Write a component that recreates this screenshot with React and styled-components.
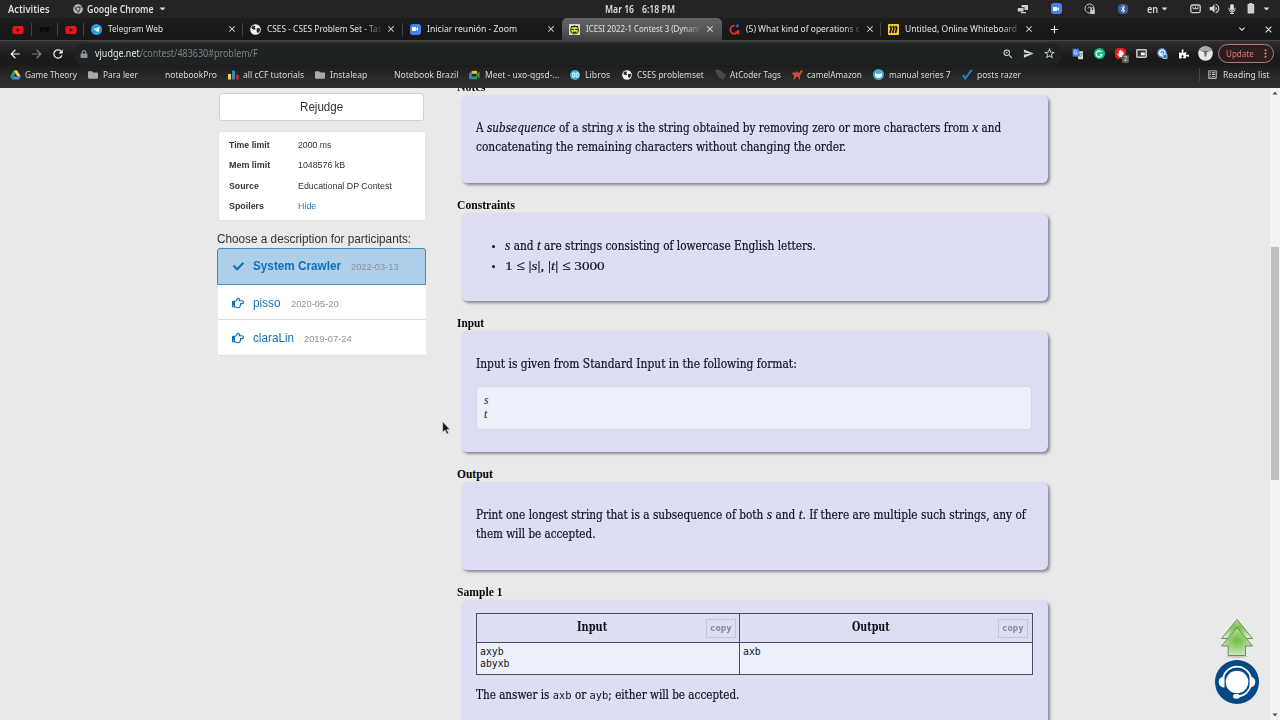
import React, { useLayoutEffect, useRef, useState } from "react";
import styled, { createGlobalStyle } from "styled-components";
import {
  FaBluetoothB,
  FaCaretDown,
  FaCheck,
  FaLock,
  FaMicrophone,
  FaPuzzlePiece,
  FaRegHandPointRight,
  FaFolder,
  FaVideo,
  FaYoutube,
  FaTelegramPlane,
  FaHandPaper,
  FaChrome,
} from "react-icons/fa";
import {
  MdArrowBack,
  MdArrowForward,
  MdRefresh,
  MdClose,
  MdAdd,
  MdExpandMore,
  MdMoreVert,
  MdSend,
  MdStarBorder,
  MdZoomIn,
  MdPublic,
  MdVolumeUp,
  MdOutlineListAlt,
} from "react-icons/md";
// ------------------------------------------------------------

const GlobalStyle = createGlobalStyle`
  * { box-sizing: border-box; }
  body { margin: 0; overflow: hidden; }
  svg { display: block; flex: none; }
`;

const UI_FONT = `"Noto Sans", "Open Sans", sans-serif`;
const BODY_FONT = `"DejaVu Serif Condensed", "DejaVu Serif", serif`;

const FitBox = styled.span`
  display: inline-block;
  width: ${(p) => p.$w}px;
  white-space: nowrap;
  text-align: left;
`;

const FitInner = styled.span`
  display: inline-block;
  transform-origin: 0 50%;
`;

// squeezes a run of text to the given width
function Fit({ w, children }) {
  const ref = useRef(null);
  const [scale, setScale] = useState(1);
  useLayoutEffect(() => {
    setScale(w / ref.current.offsetWidth);
  }, [w]);
  return (
    <FitBox $w={w}>
      <FitInner ref={ref} style={{ transform: `scaleX(${scale})` }}>
        {children}
      </FitInner>
    </FitBox>
  );
}

const Screen = styled.div`
  position: relative;
  width: 1280px;
  height: 720px;
  display: flex;
  flex-direction: column;
  overflow: hidden;
  background: #e9e9e9;
  font-family: ${UI_FONT};
`;

// ---------- desktop bar ----------

const DesktopBar = styled.div`
  display: grid;
  grid-template-columns: 605px 1fr auto;
  height: 18px;
  background: #262324;
  color: #dedede;
  font-size: 10px;
  font-weight: 600;
  line-height: 16px;
`;

const BarGroup = styled.div`
  display: flex;
  align-items: center;
  gap: ${(p) => p.$gap || 0}px;
  padding: 0 0 1px ${(p) => p.$left || 0}px;
`;

const AppMenu = styled.div`
  display: flex;
  align-items: center;
  gap: 4px;
  margin-left: 23px;
`;

const Slot = styled.div`
  display: flex;
  align-items: center;
  justify-content: center;
  width: ${(p) => p.$w}px;
  margin-left: ${(p) => p.$ml || 0}px;
  color: ${(p) => p.$color || "#d8d8d8"};
`;

const Tray = styled.div`
  display: flex;
  align-items: center;
  padding: 0 8px 1px 0;
`;

const Tile = styled.span`
  display: flex;
  flex: none;
  align-items: center;
  justify-content: center;
  width: ${(p) => p.$size || 11}px;
  height: ${(p) => p.$size || 11}px;
  border-radius: ${(p) => p.$r || "3px"};
  background: ${(p) => p.$bg};
  color: ${(p) => p.$color || "#fff"};
`;

// ---------- tabs ----------

const TabStrip = styled.div`
  display: flex;
  align-items: flex-start;
  height: 22px;
  padding-left: 4px;
  background: linear-gradient(#1e1c1c, #191818 60%, #171717);
`;

const Pinned = styled.div`
  display: flex;
  align-items: center;
  justify-content: center;
  width: ${(p) => p.$w}px;
  height: 13px;
  margin-top: 5px;
  border-right: 1px solid #454343;
`;

const TabBox = styled.div`
  display: flex;
  align-items: center;
  width: 159.4px;
  height: ${(p) => (p.$active ? "22px" : "13px")};
  margin-top: ${(p) => (p.$active ? 0 : "4.5px")};
  padding: 0 5px 0 7px;
  border-right: 1px solid ${(p) => (p.$line ? "#454343" : "transparent")};
  border-radius: ${(p) => (p.$active ? "5px 5px 0 0" : 0)};
  background: ${(p) =>
    p.$active ? "linear-gradient(#646464, #555 55%, #414141)" : "transparent"};
  color: #e4e4e4;
`;

const TabTitle = styled.div`
  width: 116px;
  margin: 0 3px 1px 6px;
  overflow: hidden;
  font-size: 9.8px;
  line-height: 14px;
  mask-image: ${(p) =>
    p.$fade ? "linear-gradient(90deg, #000 84%, transparent)" : "none"};
`;

const StripButton = styled.div`
  display: flex;
  align-items: center;
  justify-content: center;
  height: 22px;
  width: 16px;
  margin-left: ${(p) => p.$ml}px;
  color: #f0f0f0;
`;

// ---------- toolbar ----------

const Toolbar = styled.div`
  display: flex;
  align-items: center;
  height: 26px;
  border-top: 1px solid #454545;
  background: linear-gradient(#313131, #191919 60%, #1b1b1b);
`;

const NavButtons = styled.div`
  display: flex;
  gap: 7.5px;
  width: 74px;
  padding-left: 8px;
`;

const Address = styled.div`
  display: flex;
  align-items: center;
  width: 988px;
  height: 22px;
  padding: 0 2px 0 6px;
  border-radius: 11px;
  background: #1e2223;
  color: #7e8385;
  font-size: 10px;
`;

const Url = styled.div`
  flex: 1;
  margin: 0 0 2px 7px;
  line-height: 16px;
  strong {
    color: #e8e8e8;
    font-weight: 400;
  }
`;

const Extensions = styled.div`
  display: flex;
  align-items: center;
  width: 156px;
  padding-left: 5.5px;
`;

const Badge = styled.span`
  position: absolute;
  right: -3px;
  bottom: -4px;
  padding: 0 1.5px;
  border-radius: 1px;
  background: #5b5b5b;
  color: #eee;
  font-size: 6.5px;
  line-height: 8px;
`;

const Badged = styled.span`
  position: relative;
`;

const UpdateButton = styled.div`
  display: flex;
  align-items: center;
  justify-content: space-between;
  width: 56px;
  height: 19px;
  padding: 0 1px 1px 7px;
  border: 1px solid #b57c7c;
  border-radius: 10px;
  background: #2c1f1f;
  color: #e17a79;
  font-size: 9.5px;
`;

// ---------- bookmarks ----------

const Bookmarks = styled.div`
  display: flex;
  align-items: center;
  gap: 11.35px;
  height: 22px;
  padding: 0 10px 5px;
  background: linear-gradient(#1d1d1d, #2d2d2d 70%, #303030);
  color: #dadada;
  font-size: 9.8px;
  line-height: 14px;
`;

const Bookmark = styled.div`
  display: flex;
  align-items: center;
  gap: 5px;
`;

const BookmarkIcon = styled.div`
  display: flex;
  width: 10px;
  height: 11px;
  align-items: center;
  justify-content: center;
`;

const ReadingList = styled.div`
  display: flex;
  align-items: center;
  gap: 5px;
  margin-left: auto;
  padding-left: 7px;
  border-left: 1px solid #444;
`;

// ---------- page ----------

const Page = styled.div`
  display: flex;
  flex: 1;
  min-height: 0;
  padding-left: 217px;
  overflow: hidden;
`;

const Sidebar = styled.aside`
  width: 209px;
  color: #333;
  font-family: "Liberation Sans", Arial, sans-serif;
  font-size: 12px;
`;

const RejudgeButton = styled.div`
  height: 28px;
  margin: 5px 2px 0;
  border: 1px solid #d2d2d2;
  border-radius: 3px;
  background: #fff;
  line-height: 26px;
  text-align: center;
`;

const InfoCard = styled.dl`
  display: grid;
  grid-template-columns: 69px 1fr;
  grid-auto-rows: 20.4px;
  height: 90px;
  margin: 10px 0 0 1px;
  padding: 3px 9.5px;
  border: 1px solid #e2e2e2;
  border-radius: 3px;
  background: #fff;
  font-size: 9.4px;
  line-height: 20px;
  dt { font-weight: 700; }
  dd { margin: 0; }
`;

const Link = styled.span`
  color: #1a7cc0;
`;

const Prompt = styled.div`
  margin-top: 10px;
  height: 17px;
  line-height: 16px;
`;

const Author = styled.div`
  display: flex;
  align-items: center;
  height: ${(p) => (p.$active ? 37 : 35.3)}px;
  padding: 0 0 ${(p) => (p.$active ? 1 : 0)}px ${(p) => (p.$active ? 15 : 13)}px;
  margin-left: ${(p) => (p.$active ? 0 : 1)}px;
  border: 1px solid ${(p) => (p.$active ? "#3f8cc6" : "transparent")};
  border-bottom-color: ${(p) => (p.$active ? "#3f8cc6" : "#ddd")};
  border-radius: ${(p) => (p.$active ? "3px 3px 0 0" : 0)};
  background: ${(p) => (p.$active ? "#adcfea" : "#fff")};
  color: #0e72b8;
  font-weight: ${(p) => (p.$active ? 700 : 400)};
`;

const AuthorName = styled.span`
  margin: 0 10px 0 9px;
`;

const AuthorDate = styled.span`
  padding-top: 1px;
  color: #8b9399;
  font-size: 9.5px;
  font-weight: 400;
`;

const Statement = styled.main`
  width: 591px;
  margin: -8px 0 0 31px;
  color: #101225;
  font-family: ${BODY_FONT};
  font-size: 12px;
  line-height: 19px;
  -webkit-text-stroke: 0.2px currentColor;
`;

const Heading = styled.h4`
  height: 15px;
  margin: ${(p) => (p.$first ? 0 : "15px")} 0 0 0;
  color: #080808;
  font: bold 11.5px/14px "Liberation Serif", serif;
  -webkit-text-stroke: 0;
`;

const Card = styled.section`
  height: ${(p) => p.$h}px;
  margin-left: 4px;
  padding: ${(p) => p.$top || 24}px 16px 0 15px;
  border-radius: 6px;
  background: #dddef3;
  box-shadow: 2px 2px 3px #85879a;
`;

const Line = styled.div`
  height: 19px;
`;

const Bullets = styled.ul`
  margin: 0;
  padding-left: 29px;
  li { height: 19px; }
  li::marker { font-size: 10px; }
`;

const M = styled.i`
  font-family: "Liberation Serif", serif;
  font-size: ${(p) => p.$size || 14}px;
  line-height: 1;
`;

const MathText = styled.span`
  font-family: "Liberation Serif", serif;
  font-size: 13.5px;
`;

const Pre = styled.div`
  height: 44px;
  margin-top: 12px;
  padding: 7px 7px;
  border: 1px solid #d5d6e4;
  border-radius: 4px;
  background: #ecf0fa;
  line-height: 14px;
  -webkit-text-stroke: 0;
`;

const PreLine = styled.div`
  display: flex;
  align-items: center;
  height: 14px;
`;

const SampleTable = styled.div`
  display: grid;
  grid-template-columns: 263px 1fr;
  grid-template-rows: 28.5px 32px;
  width: 557px;
  border: 1px solid #484b5c;
  border-width: 1px 0 0 1px;
`;

const Th = styled.div`
  display: grid;
  grid-template-columns: 1fr auto;
  align-items: center;
  padding: 0 ${(p) => p.$right}px 0 ${(p) => p.$left}px;
  border: 1px solid #484b5c;
  border-width: 0 1px 1px 0;
  color: #0b0c18;
  font-weight: 700;
  text-align: center;
  -webkit-text-stroke: 0;
`;

const Td = styled.pre`
  margin: 0;
  padding: 3px 3px 0;
  border: 1px solid #484b5c;
  border-width: 0 1px 1px 0;
  background: #ecf0fa;
  font: 9.8px/12px "DejaVu Sans Mono", monospace;
  -webkit-text-stroke: 0;
`;

const CopyButton = styled.span`
  height: 19px;
  margin-top: 1px;
  padding: 0 3px;
  border: 1px solid #c4c6d6;
  color: #858797;
  font: bold 9.4px/16px "DejaVu Sans Mono", monospace;
`;

const Code = styled.code`
  font: 10.8px "DejaVu Sans Mono", monospace;
  -webkit-text-stroke: 0;
`;

const Answer = styled.div`
  margin-top: 11px;
`;

const Scrollbar = styled.div`
  display: flex;
  flex-direction: column;
  align-items: center;
  justify-content: space-between;
  width: 10px;
  margin-left: auto;
  padding: 3px 0;
  background: #f2f2f2;
`;

const Thumb = styled.div`
  width: 8px;
  height: 233px;
  margin-bottom: 81px;
  background: #bfbfc0;
`;

const Floating = styled.div`
  position: absolute;
  left: 1215px;
  top: 618px;
`;

const Pointer = styled.svg`
  position: absolute;
  left: 442px;
  top: 421px;
`;
// ------------------------------------------------------------

const Globe = ({ size = 12 }) => (
  <svg width={size - 1} height={size - 1} viewBox="0 0 11 11">
    <circle cx="5.5" cy="5.5" r="5.3" fill="#f4f4f4" />
    <path d="M1.3 3.2L3.6 1.4l1.8.8-.8 1.6 1.2 1.4-2 .6L2.4 5zM6.6 4.6l2.8-.8.6 2.6-2 2.8-1.4-2z" fill="#222" />
  </svg>
);

const Zoom = () => (
  <Tile $bg="#4584ec">
    <FaVideo size={6} />
  </Tile>
);

const YouTube = () => <FaYoutube size={12} color="#e9131c" />;

const Judge = () => (
  <svg width="11" height="11" viewBox="0 0 11 11">
    <rect width="11" height="11" fill="#d9d9ce" />
    <circle cx="5.5" cy="6" r="4" fill="#d6d82a" stroke="#333d16" strokeWidth="1" />
    <path d="M2 2.5h7M2.5 5.5h2.3M6.2 5.5h2.3M4 8q1.5 1 3 0" stroke="#222" strokeWidth="1.1" fill="none" />
  </svg>
);

const Redirect = () => (
  <svg width="11" height="11" viewBox="0 0 11 11">
    <path d="M5.5 1.7A4 4 0 1 0 9.3 6.5" stroke="#d8363b" strokeWidth="1.8" fill="none" />
    <path d="M6.5 7.5L9.5 9.5V6" stroke="#d8363b" strokeWidth="1.5" fill="none" />
    <circle cx="8.5" cy="2" r="1.4" fill="#3c67d8" />
  </svg>
);

const Miro = () => (
  <svg width="11" height="11" viewBox="0 0 11 11">
    <rect width="11" height="11" rx="1" fill="#f7cc39" />
    <path d="M2 2l1.3 2L2 9M4.7 2L6 4 4.7 9M7.4 2l1.3 2-1.3 5" stroke="#1b1920" strokeWidth="1.7" fill="none" />
  </svg>
);

const Drive = () => (
  <svg width="11" height="10" viewBox="0 0 11 10">
    <path d="M3.8 0.5h3.3L4 6 2 9.3.2 6.4z" fill="#28a565" />
    <path d="M3.8.5h3.3l3.8 6H7.4z" fill="#f8cf43" />
    <path d="M3.7 6.5h7.2L9 9.5H2z" fill="#4a8cec" />
  </svg>
);

const Bars = () => (
  <svg width="11" height="10" viewBox="0 0 11 10">
    <path d="M0 4h3v5.5H0z" fill="#f3cc53" />
    <path d="M4 .8h3v8.7H4z" fill="#2f8ac4" />
    <path d="M8 5h3v4.5H8z" fill="#b9273a" />
  </svg>
);

const Meet = () => (
  <svg width="11" height="10" viewBox="0 0 11 10">
    <path d="M0 3.4L3 .8v8.4H1A1 1 0 0 1 0 8z" fill="#2b7de9" />
    <path d="M3 .8h5v3H3z" fill="#f5b92c" />
    <path d="M3 6.5h5v2.7H3zM7.5 4L10.6 1.7v6.7L7.5 6z" fill="#27a552" />
  </svg>
);

const Libros = () => (
  <Tile $size={10} $r="50%" $bg="#2fb5e6">
    <svg width="7" height="6" viewBox="0 0 7 6">
      <path d="M.7 1h2.1v4H.7zM4.2 1h2.1v4H4.2z" fill="none" stroke="#fff" strokeWidth=".9" />
    </svg>
  </Tile>
);

const Tag = () => (
  <svg width="11" height="11" viewBox="0 0 11 11">
    <path d="M0 1l5 0 6 5-3 5-5-3z" fill="#484a49" />
  </svg>
);

const Camel = () => (
  <svg width="11" height="10" viewBox="0 0 11 10">
    <path d="M0 3l2-1 1 1 2-2 1 2 2-1 .5-1.5H11L9.5 3 8 6v3.5H7L6 6.5 4 7 2.5 9.5h-1L2 6z" fill="#c9503a" />
  </svg>
);

const Manual = () => (
  <Tile $size={11} $r="50%" $bg="#45aadc">
    <svg width="7" height="6" viewBox="0 0 7 6">
      <path d="M0 1l1.5.8h4L7 1v3L5 5.7H2L0 4z" fill="#fff" />
    </svg>
  </Tile>
);

const BlueCheck = () => (
  <svg width="11" height="11" viewBox="0 0 11 11">
    <path d="M1 6l2.2 3.5L9.7 1" stroke="#1786cf" strokeWidth="2" fill="none" />
  </svg>
);

const Windows = () => (
  <svg width="12" height="10" viewBox="0 0 12 10">
    <path d="M4.5 1H11v5H7.5V3.2h-3zM.8 4h5.8v3.4H.8zM4 8h5v1.3H4z" fill="#cfcfcf" />
  </svg>
);

const LockedCircle = () => (
  <svg width="12" height="12" viewBox="0 0 12 12">
    <circle cx="5.5" cy="5.5" r="4.5" fill="none" stroke="#ccc" strokeWidth="1" />
    <path d="M4 5.5a1.6 1.6 0 1 1 2 1.5M7.2 7V6a1.3 1.3 0 0 1 2.6 0v1" stroke="#ccc" fill="none" />
    <path d="M6.3 7h4.5v4H6.3z" fill="#ccc" />
  </svg>
);

const Port = () => (
  <svg width="11" height="10" viewBox="0 0 11 10">
    <rect x=".8" y="1" width="9.4" height="7.6" rx="1.5" fill="none" stroke="#cfcfcf" strokeWidth="1.3" />
    <path d="M3 2.5v2.2h5V2.5M5.5 2.5v2" stroke="#cfcfcf" fill="none" />
  </svg>
);

const Translate = () => (
  <svg width="12" height="12" viewBox="0 0 12 12">
    <path d="M4 3.3h7v7.9H6.5z" fill="#d5d8de" />
    <path d="M.6.8h6l1.8 7.8H.6z" fill="#4b83ea" />
    <path d="M5 3.4A1.7 1.7 0 1 0 5.3 5H3.9" stroke="#fff" strokeWidth=".8" fill="none" />
    <path d="M8.3 5.5h2.2M8.5 9l1.6-3.4" stroke="#5f6a78" strokeWidth=".7" fill="none" />
  </svg>
);

const PictureInPicture = () => (
  <svg width="11" height="9" viewBox="0 0 11 9">
    <rect x=".8" y=".8" width="9.4" height="7.4" rx=".6" fill="#333" stroke="#c9c9c9" strokeWidth="1.5" />
    <rect x="4.8" y="3.5" width="4" height="2.8" fill="#fff" />
  </svg>
);

const Privacy = () => (
  <svg width="11" height="11" viewBox="0 0 11 11">
    <circle cx="5" cy="5" r="4.3" fill="#dcecf8" stroke="#3e83bd" strokeWidth="1.2" />
    <path d="M4 5a1.4 1.4 0 1 1 1.5 1.3" stroke="#2a6da6" fill="none" />
    <path d="M6 6.5h4v4H6z" fill="#2f75ad" stroke="#e8eef3" strokeWidth=".7" />
  </svg>
);

const Avatar = () => (
  <svg width="15" height="15" viewBox="0 0 15 15">
    <circle cx="7.5" cy="7.5" r="7.3" fill="#e8e9e4" />
    <path d="M1 4.5a7.3 7.3 0 0 1 13 0l-3 1H4z" fill="#aaa69b" />
    <path d="M4.5 5h6v1H4.5z" fill="#6d6a63" />
    <path d="M6 6h3l-.5 4.5h-2z" fill="#77736b" />
  </svg>
);

const UpArrow = () => (
  <svg width="44" height="42" viewBox="0 0 44 42">
    <defs>
      <radialGradient id="leaf" cx=".5" cy=".45" r=".6">
        <stop offset="0" stopColor="#6fbc45" />
        <stop offset=".45" stopColor="#9ad17b" />
        <stop offset="1" stopColor="#d3ebc3" />
      </radialGradient>
    </defs>
    <ellipse cx="22" cy="38.5" rx="11" ry="1.5" fill="#c9cbc8" />
    <path d="M22 1.5L37.5 20.5H6.5z" fill="url(#leaf)" stroke="#668151" strokeWidth=".9" />
    <path d="M22 9.5L37.5 28H30.5V37.5H13.2V28H6.5z" fill="url(#leaf)" stroke="#668151" strokeWidth=".9" />
  </svg>
);

const Support = () => (
  <svg width="44" height="44" viewBox="0 0 44 44">
    <circle cx="22" cy="22" r="22" fill="#064785" />
    <circle cx="22" cy="22" r="11.3" fill="#fff" />
    <path d="M8 18a14.3 14.3 0 0 1 28 0M36 24a14.3 14.3 0 0 1-12.5 12.3" fill="none" stroke="#fff" strokeWidth="1.7" />
    <path d="M9.5 16.5v11C6 27.5 3.7 25 3.7 22s2.3-5.5 5.8-5.5zM34.5 16.5v11c3.5 0 5.8-2.5 5.8-5.5s-2.3-5.5-5.8-5.5z" fill="#fff" />
    <ellipse cx="21.5" cy="36.2" rx="3.4" ry="2.5" fill="#fff" />
  </svg>
);
// ------------------------------------------------------------

const tabs = [
  { title: "Telegram Web", w: 55, line: true, icon: <Tile $r="50%" $bg="#2c9fda"><FaTelegramPlane size={7} /></Tile> },
  { title: "CSES - CSES Problem Set - Tas", w: 115, fade: true, line: true, icon: <Globe /> },
  { title: "Iniciar reunión - Zoom", w: 90, icon: <Zoom /> },
  { title: "ICESI 2022-1 Contest 3 (Dynam", w: 114, fade: true, active: true, icon: <Judge /> },
  { title: "(5) What kind of operations c", w: 114, fade: true, line: true, icon: <Redirect /> },
  { title: "Untitled, Online Whiteboard", w: 112, fade: true, icon: <Miro /> },
];

const bookmarks = [
  { title: "Game Theory", w: 52, icon: <Drive /> },
  { title: "Para leer", w: 35, icon: <FaFolder size={10} color="#a9a9a9" /> },
  { title: "notebookPro", w: 52 },
  { title: "all cCF tutorials", w: 61, icon: <Bars /> },
  { title: "Instaleap", w: 37.5, icon: <FaFolder size={10} color="#a9a9a9" /> },
  { title: "Notebook Brazil", w: 64 },
  { title: "Meet - uxo-qgsd-...", w: 74.5, icon: <Meet /> },
  { title: "Libros", w: 25, icon: <Libros /> },
  { title: "CSES problemset", w: 67, icon: <Globe size={11} /> },
  { title: "AtCoder Tags", w: 51, icon: <Tag /> },
  { title: "camelAmazon", w: 55, icon: <Camel /> },
  { title: "manual series 7", w: 62, icon: <Manual /> },
  { title: "posts razer", w: 44, icon: <BlueCheck /> },
];

const limits = [
  ["Time limit", "2000 ms", 41, 33.5],
  ["Mem limit", "1048576 kB", 41, 47],
  ["Source", "Educational DP Contest", 30, 93.5],
];

function Browser() {
  return (
    <>
      <DesktopBar>
        <BarGroup $left={8}>
          <Fit w={42}>Activities</Fit>
          <AppMenu>
            <FaChrome size={10} color="#b9b9b9" />
            <Fit w={67}>Google Chrome</Fit>
            <FaCaretDown size={9} />
          </AppMenu>
        </BarGroup>
        <BarGroup $gap={7}>
          <Fit w={29.5}>Mar 16</Fit>
          <Fit w={33}>6:18 PM</Fit>
        </BarGroup>
        <Tray>
          <Slot $w={33}><Windows /></Slot>
          <Slot $w={33.3}><Zoom /></Slot>
          <Slot $w={33.3}><LockedCircle /></Slot>
          <Slot $w={33.3}><Tile $size={10} $r="4px" $bg="#385f98"><FaBluetoothB size={8} /></Tile></Slot>
          <Slot $w={37}><Fit w={11}>en</Fit><Slot $w={10} $ml={2}><FaCaretDown size={9} /></Slot></Slot>
          <Slot $w={19} $ml={9.5}><Port /></Slot>
          <Slot $w={18}><MdVolumeUp size={13} /></Slot>
          <Slot $w={18}><FaMicrophone size={10} /></Slot>
          <Slot $w={19}>
            <svg width="8" height="11" viewBox="0 0 8 11">
              <path d="M2.3 0h3v1h1.9v9.5H.6V1h1.7z" fill="#cfcfcf" />
            </svg>
          </Slot>
          <Slot $w={12}><FaCaretDown size={9} /></Slot>
        </Tray>
      </DesktopBar>

      <TabStrip>
        <Pinned $w={28}><YouTube /></Pinned>
        <Pinned $w={26}>
          <svg width="11" height="5" viewBox="0 0 11 5">
            <path d="M0 1h2v3h2V1h3v3h2V1h2" stroke="#080808" strokeWidth="1.4" fill="none" />
          </svg>
        </Pinned>
        <Pinned $w={26}><YouTube /></Pinned>
        {tabs.map((e) => (
          <TabBox key={e.title} $active={e.active} $line={e.line}>
            {e.icon}
            <TabTitle $fade={e.fade}>
              <Fit w={e.w}>{e.title}</Fit>
            </TabTitle>
            <MdClose size={10} />
          </TabBox>
        ))}
        <StripButton $ml={6}><MdAdd size={13} /></StripButton>
        <StripButton $ml={172}><MdExpandMore size={12} /></StripButton>
        <StripButton $ml={10}><MdClose size={11} /></StripButton>
      </TabStrip>

      <Toolbar>
        <NavButtons>
          <MdArrowBack size={14} color="#f1f1f1" />
          <MdArrowForward size={14} color="#808080" />
          <MdRefresh size={14} color="#f1f1f1" />
        </NavButtons>
        <Address>
          <FaLock size={8} color="#8f9496" />
          <Url>
            <Fit w={163}>
              <strong>vjudge.net</strong>/contest/483630#problem/F
            </Fit>
          </Url>
          <Slot $w={21}><MdZoomIn size={12} /></Slot>
          <Slot $w={21}><MdSend size={11} /></Slot>
          <Slot $w={21}><MdStarBorder size={13} /></Slot>
        </Address>
        <Extensions>
          <Slot $w={21.2}><Translate /></Slot>
          <Slot $w={21.2}>
            <Tile $r="50%" $bg="#13bd83">
              <svg width="8" height="8" viewBox="0 0 8 8">
                <path d="M6.6 2.2A3 3 0 1 0 7 4.6H4.8" stroke="#fff" strokeWidth="1.1" fill="none" />
              </svg>
            </Tile>
          </Slot>
          <Slot $w={21.2}>
            <Badged>
              <Tile $r="4px" $bg="#e0211f"><FaHandPaper size={7} /></Tile>
              <Badge>2</Badge>
            </Badged>
          </Slot>
          <Slot $w={21.2}><PictureInPicture /></Slot>
          <Slot $w={21.2}><Privacy /></Slot>
          <Slot $w={21.2} $color="#fff"><FaPuzzlePiece size={10} /></Slot>
          <Slot $w={21.2}><Avatar /></Slot>
        </Extensions>
        <UpdateButton>
          <Fit w={28}>Update</Fit>
          <MdMoreVert size={13} />
        </UpdateButton>
      </Toolbar>

      <Bookmarks>
        {bookmarks.map((e) => (
          <Bookmark key={e.title}>
            <BookmarkIcon>{e.icon}</BookmarkIcon>
            <Fit w={e.w}>{e.title}</Fit>
          </Bookmark>
        ))}
        <ReadingList>
          <MdOutlineListAlt size={11} />
          <Fit w={47}>Reading list</Fit>
        </ReadingList>
      </Bookmarks>
    </>
  );
}

function ProblemSidebar() {
  return (
    <Sidebar>
      <RejudgeButton><Fit w={43.5}>Rejudge</Fit></RejudgeButton>
      <InfoCard>
        {limits.map(([name, value, nameWidth, valueWidth]) => (
          <React.Fragment key={name}>
            <dt><Fit w={nameWidth}>{name}</Fit></dt>
            <dd><Fit w={valueWidth}>{value}</Fit></dd>
          </React.Fragment>
        ))}
        <dt><Fit w={35}>Spoilers</Fit></dt>
        <dd><Link><Fit w={18}>Hide</Fit></Link></dd>
      </InfoCard>
      <Prompt><Fit w={194}>Choose a description for participants:</Fit></Prompt>
      <Author $active>
        <FaCheck size={11} />
        <AuthorName><Fit w={88}>System Crawler</Fit></AuthorName>
        <AuthorDate><Fit w={48}>2022-03-13</Fit></AuthorDate>
      </Author>
      <Author>
        <FaRegHandPointRight size={12} />
        <AuthorName><Fit w={27.5}>pisso</Fit></AuthorName>
        <AuthorDate><Fit w={48}>2020-05-20</Fit></AuthorDate>
      </Author>
      <Author>
        <FaRegHandPointRight size={12} />
        <AuthorName><Fit w={41}>claraLin</Fit></AuthorName>
        <AuthorDate><Fit w={48}>2019-07-24</Fit></AuthorDate>
      </Author>
    </Sidebar>
  );
}

function ProblemStatement() {
  return (
    <Statement>
      <Heading $first><Fit w={28}>Notes</Fit></Heading>
      <Card $h={88}>
        <Line>
          <Fit w={525}>
            A <i>subsequence</i> of a string <M>x</M> is the string obtained by
            removing zero or more characters from <M>x</M> and
          </Fit>
        </Line>
        <Line>
          <Fit w={370}>
            concatenating the remaining characters without changing the order.
          </Fit>
        </Line>
      </Card>

      <Heading><Fit w={58.5}>Constraints</Fit></Heading>
      <Card $h={88}>
        <Bullets>
          <li>
            <Fit w={311}>
              <M>s</M> and <M>t</M> are strings consisting of lowercase English letters.
            </Fit>
          </li>
          <li>
            <Fit w={100}>
              <MathText>1 ≤ |<i>s</i>|, |<i>t</i>| ≤ 3000</MathText>
            </Fit>
          </li>
        </Bullets>
      </Card>

      <Heading><Fit w={27.5}>Input</Fit></Heading>
      <Card $h={121}>
        <Line>
          <Fit w={321}>Input is given from Standard Input in the following format:</Fit>
        </Line>
        <Pre>
          <PreLine><M $size={11.5}>s</M></PreLine>
          <PreLine><M $size={11.5}>t</M></PreLine>
        </Pre>
      </Card>

      <Heading><Fit w={36}>Output</Fit></Heading>
      <Card $h={88}>
        <Line>
          <Fit w={549.5}>
            Print one longest string that is a subsequence of both <M>s</M> and{" "}
            <M>t</M>. If there are multiple such strings, any of
          </Fit>
        </Line>
        <Line>
          <Fit w={119.5}>them will be accepted.</Fit>
        </Line>
      </Card>

      <Heading><Fit w={45.5}>Sample 1</Fit></Heading>
      <Card $h={140} $top={13}>
        <SampleTable>
          <Th $left={0} $right={3}>
            <div><Fit w={30}>Input</Fit></div>
            <CopyButton><Fit w={22}>copy</Fit></CopyButton>
          </Th>
          <Th $left={3} $right={4}>
            <div><Fit w={38}>Output</Fit></div>
            <CopyButton><Fit w={22}>copy</Fit></CopyButton>
          </Th>
          <Td>{"axyb\nabyxb"}</Td>
          <Td>axb</Td>
        </SampleTable>
        <Answer>
          <Fit w={263.5}>
            The answer is <Code>axb</Code> or <Code>ayb</Code>; either will be accepted.
          </Fit>
        </Answer>
      </Card>
    </Statement>
  );
}

const App = () => {
  return (
    <Screen>
      <GlobalStyle />
      <Browser />
      <Page>
        <ProblemSidebar />
        <ProblemStatement />
        <Scrollbar>
          <svg width="6" height="4" viewBox="0 0 6 4">
            <path d="M.5 3.5L3 .8l2.5 2.7z" fill="#444" />
          </svg>
          <Thumb />
          <svg width="6" height="4" viewBox="0 0 6 4">
            <path d="M.5.5h5L3 3.3z" fill="#444" />
          </svg>
        </Scrollbar>
      </Page>
      <Floating>
        <UpArrow />
        <Support />
      </Floating>
      <Pointer width="9" height="14" viewBox="0 0 9 14">
        <path d="M.7.8v10.4l2.4-2.1 1.8 3.8 1.6-.8-1.8-3.5h3.2z" fill="#111" stroke="#ddd" strokeWidth=".6" />
      </Pointer>
    </Screen>
  );
};

export default App;
